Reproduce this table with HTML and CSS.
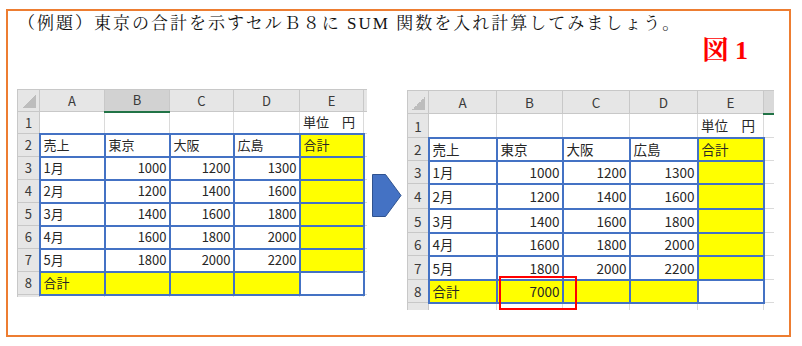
FILE: index.html
```html
<!DOCTYPE html>
<html lang="ja">
<head>
<meta charset="utf-8">
<link rel="stylesheet" href="styles.css">
</head>
<body>
<div class="frame">
  <p class="title">（例題）東京の合計を示すセルＢ８に SUM 関数を入れ計算してみましょう。</p>
  <div class="fig">図 1</div>
  <div class="figures">
    <div class="sheet sheet-left">
      <table>
        <colgroup><col class="c-rh-l"><col class="c-65"><col class="c-65"><col class="c-64"><col class="c-66"><col class="c-64"><col class="c-4"></colgroup>
        <tr class="h22"><th class="corner"></th><th>A</th><th class="sel">B</th><th>C</th><th>D</th><th>E</th><th></th></tr>
        <tr class="h22"><th>1</th><td></td><td></td><td></td><td></td><td>単位　円</td><td></td></tr>
        <tr class="h23"><th>2</th><td class="d">売上</td><td class="d">東京</td><td class="d">大阪</td><td class="d">広島</td><td class="d y">合計</td><td></td></tr>
        <tr class="h23"><th>3</th><td class="d">1月</td><td class="d n">1000</td><td class="d n">1200</td><td class="d n">1300</td><td class="d y"></td><td></td></tr>
        <tr class="h23"><th>4</th><td class="d">2月</td><td class="d n">1200</td><td class="d n">1400</td><td class="d n">1600</td><td class="d y"></td><td></td></tr>
        <tr class="h23"><th>5</th><td class="d">3月</td><td class="d n">1400</td><td class="d n">1600</td><td class="d n">1800</td><td class="d y"></td><td></td></tr>
        <tr class="h23"><th>6</th><td class="d">4月</td><td class="d n">1600</td><td class="d n">1800</td><td class="d n">2000</td><td class="d y"></td><td></td></tr>
        <tr class="h23"><th>7</th><td class="d">5月</td><td class="d n">1800</td><td class="d n">2000</td><td class="d n">2200</td><td class="d y"></td><td></td></tr>
        <tr class="h23"><th>8</th><td class="d y">合計</td><td class="d y"></td><td class="d y"></td><td class="d y"></td><td class="d"></td><td></td></tr>
        <tr class="h23"><th></th><td></td><td></td><td></td><td></td><td></td><td></td></tr>
      </table>
    </div>
    <svg class="arrow" width="30" height="43" viewBox="0 0 30 43">
      <polygon points="0.5,0.5 13.5,0.5 29,21.5 13.5,42.5 0.5,42.5" fill="#4472C4" stroke="#2F528F" stroke-width="1"/>
    </svg>
    <div class="sheet-wrap">
      <div class="sheet sheet-right">
        <table>
          <colgroup><col class="c-rh-r"><col class="c-68"><col class="c-66"><col class="c-67"><col class="c-68"><col class="c-66"><col class="c-11"></colgroup>
          <tr class="h23"><th class="corner"></th><th>A</th><th>B</th><th>C</th><th>D</th><th>E</th><th class="sel-strip"></th></tr>
          <tr class="h24"><th>1</th><td></td><td></td><td></td><td></td><td>単位　円</td><td></td></tr>
          <tr class="h23"><th>2</th><td class="d">売上</td><td class="d">東京</td><td class="d">大阪</td><td class="d">広島</td><td class="d y">合計</td><td></td></tr>
          <tr class="h23"><th>3</th><td class="d">1月</td><td class="d n">1000</td><td class="d n">1200</td><td class="d n">1300</td><td class="d y"></td><td></td></tr>
          <tr class="h25"><th>4</th><td class="d">2月</td><td class="d n">1200</td><td class="d n">1400</td><td class="d n">1600</td><td class="d y"></td><td></td></tr>
          <tr class="h24"><th>5</th><td class="d">3月</td><td class="d n">1400</td><td class="d n">1600</td><td class="d n">1800</td><td class="d y"></td><td></td></tr>
          <tr class="h23"><th>6</th><td class="d">4月</td><td class="d n">1600</td><td class="d n">1800</td><td class="d n">2000</td><td class="d y"></td><td></td></tr>
          <tr class="h24"><th>7</th><td class="d">5月</td><td class="d n">1800</td><td class="d n">2000</td><td class="d n">2200</td><td class="d y"></td><td></td></tr>
          <tr class="h23"><th>8</th><td class="d y">合計</td><td class="d y n">7000</td><td class="d y"></td><td class="d y"></td><td class="d"></td><td></td></tr>
          <tr class="h23"><th></th><td></td><td></td><td></td><td></td><td></td><td></td></tr>
        </table>
      </div>
      <div class="highlight"></div>
    </div>
  </div>
</div>
</body>
</html>
```

FILE: styles.css
```css
html, body {
  margin: 0;
  padding: 0;
  background: #ffffff;
}

.frame {
  margin: 9px 0 0 6px;
  width: 781px;
  height: 324px;
  border: 2px solid #ED7D31;
}

.title {
  margin: 0;
  padding: 2px 0 0 10px;
  font-family: "Liberation Serif", "Noto Serif CJK JP", "Noto Sans CJK JP", serif;
  font-size: 17px;
  line-height: 22px;
  letter-spacing: 2px;
  color: #111111;
  white-space: nowrap;
}

.fig {
  text-align: right;
  padding-right: 41px;
  padding-top: 2px;
  font-family: "Liberation Serif", "Noto Serif CJK JP", "Noto Sans CJK JP", serif;
  font-weight: bold;
  font-size: 26px;
  line-height: 28px;
  color: #FF0000;
}

.figures {
  display: flex;
  align-items: flex-start;
  margin-top: 24px;
  padding-left: 9px;
}

.sheet {
  overflow: hidden;
}

.sheet-left {
  width: 350px;
  height: 208px;
}

.sheet-right {
  width: 367px;
  height: 220px;
}

.arrow {
  display: block;
  margin: 85px 5px 0 5px;
}

.sheet-wrap {
  position: relative;
  margin-top: 1px;
}

.highlight {
  position: absolute;
  left: 92px;
  top: 186px;
  width: 74px;
  height: 30px;
  border: 2px solid #FF0000;
}

table {
  border-collapse: collapse;
  table-layout: fixed;
  font-family: "Noto Sans CJK JP", "Noto Sans", sans-serif;
  font-size: 13px;
  color: #262626;
}

.sheet-left table { width: 350px; }
.sheet-right table { width: 367px; font-size: 13.5px; }

.c-rh-l { width: 22px; }
.c-rh-r { width: 21px; }
.c-4 { width: 4px; }
.c-11 { width: 11px; }
.c-64 { width: 64px; }
.c-65 { width: 65px; }
.c-66 { width: 66px; }
.c-67 { width: 67px; }
.c-68 { width: 68px; }

.h22 { height: 22px; }
.h23 { height: 23px; }
.h24 { height: 24px; }
.h25 { height: 25px; }

th, td {
  padding: 0 3px;
  white-space: nowrap;
  overflow: hidden;
  line-height: 16px;
}

th {
  background: #E6E6E6;
  border: 1px solid #C8C8C8;
  font-weight: normal;
  color: #3A3A3A;
  text-align: center;
  padding: 0;
}

td {
  border: 1px solid #DADADA;
  text-align: left;
}

td.d {
  border: 2px solid #4472C4;
}

td.n {
  text-align: right;
  padding-right: 2px;
}

td.y {
  background: #FFFF00;
}

th.sel {
  background: #D2D2D2;
  border-bottom: 2px solid #217346;
}

th.sel-strip {
  background: #D9D9D9;
  border-bottom: 2px solid #217346;
}

th.corner {
  background:
    linear-gradient(135deg, transparent 50%, #BDBDBD 50%) no-repeat right 3px bottom 3px / 13px 13px,
    #E6E6E6;
}
```
